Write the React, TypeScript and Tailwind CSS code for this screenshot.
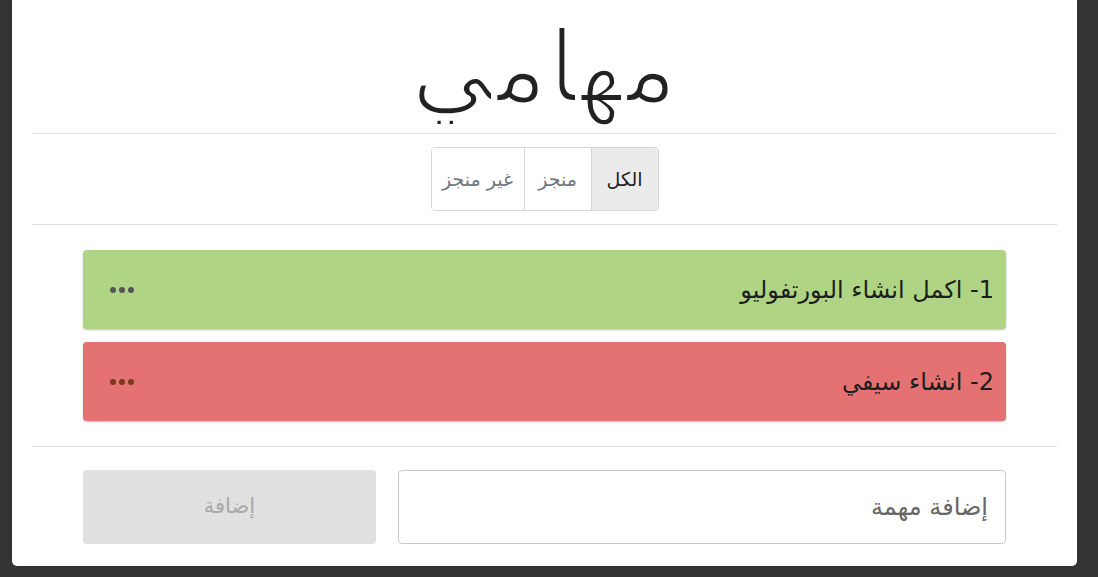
import React, { useState } from 'react';

interface Task {
  id: number;
  title: string;
  done: boolean;
}

const tasks: Task[] = [
  { id: 1, title: 'اكمل انشاء البورتفوليو', done: true },
  { id: 2, title: 'انشاء سيفي', done: false },
];

const filters = [
  { key: 'all', label: 'الكل' },
  { key: 'done', label: 'منجز' },
  { key: 'todo', label: 'غير منجز' },
];

const App = () => {
  const [filter, setFilter] = useState('all');

  return (
    <div
      dir="rtl"
      className="min-h-screen bg-[#333333] pl-[12px] pr-[21px]"
      style={{ fontFamily: '"DejaVu Sans", "Noto Sans", sans-serif' }}
    >
      <div className="bg-white rounded-b-[5px] px-5 pb-[22px]">
        {/* Title */}
        <h1 className="h-[134px] border-b border-[#dedede] text-center text-[100px] font-extralight leading-[136px] text-[#222] [-webkit-text-stroke:4px_#fff]">
          مهامي
        </h1>

        {/* Filters */}
        <div className="flex justify-center border-b border-[#dedede] py-[13px]">
          <div className="flex rounded-[4px] border border-[#d6d6d6] overflow-hidden">
            {filters.map((f, i) => (
              <button
                key={f.key}
                onClick={() => setFilter(f.key)}
                className={`h-[62px] text-[19px] ${i > 0 ? 'border-r border-[#d6d6d6]' : ''} ${
                  f.key === 'all' ? 'w-[66px]' : f.key === 'done' ? 'w-[67px]' : 'w-[93px]'
                } ${filter === f.key ? 'bg-[#ebebeb] text-[#222]' : 'bg-white text-[#6f7780]'}`}
              >
                {f.label}
              </button>
            ))}
          </div>
        </div>

        {/* Tasks */}
        <div className="flex flex-col gap-[13px] px-[51px] pt-[25px] pb-[25px] border-b border-[#dedede]">
          {tasks.map((t) => (
            <div
              key={t.id}
              className={`flex h-[79px] items-center justify-between rounded-[4px] pr-[12px] pl-[27px] shadow-[0_1px_2px_rgba(0,0,0,0.25)] ${
                t.done ? 'bg-[#afd584]' : 'bg-[#e47272]'
              }`}
            >
              <span className="text-[24px] text-[#1d1d1d]">
                {t.id}- {t.title}
              </span>
              <span className="flex gap-[3px]">
                {[0, 1, 2].map((d) => (
                  <span
                    key={d}
                    className={`h-[6px] w-[6px] rounded-full ${t.done ? 'bg-[#555]' : 'bg-[#7a3a1e]'}`}
                  />
                ))}
              </span>
            </div>
          ))}
        </div>

        {/* Add task */}
        <div className="flex gap-[22px] px-[51px] pt-[23px]">
          <input
            placeholder="إضافة مهمة"
            className="h-[74px] flex-1 rounded-[4px] border border-[#c8c8c8] px-[17px] text-[24px] text-[#333] placeholder:text-[#666] outline-none"
          />
          <button className="h-[74px] w-[293px] rounded-[4px] bg-[#e0e0e0] text-[21px] text-[#a8a8a8]">
            إضافة
          </button>
        </div>
      </div>
    </div>
  );
};

export default App;
